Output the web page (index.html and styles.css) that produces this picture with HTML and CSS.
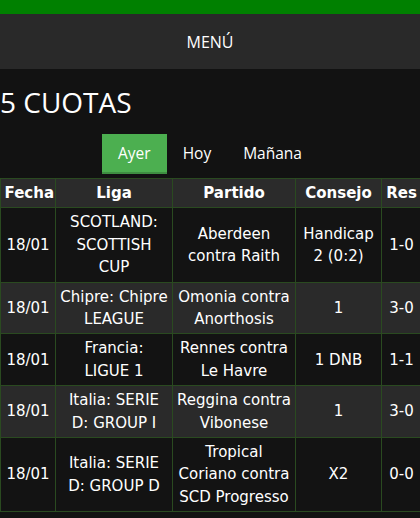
FILE: index.html
```html
<!DOCTYPE html>
<html lang="es">
<head>
<meta charset="utf-8">
<title>5 Cuotas</title>
<link rel="stylesheet" href="styles.css">
</head>
<body>
<div class="topbar"></div>
<nav class="menu">MENÚ</nav>
<h1 class="title">5 CUOTAS</h1>
<div class="tabs">
  <a class="tab active">Ayer</a>
  <a class="tab">Hoy</a>
  <a class="tab">Mañana</a>
</div>
<div class="table-wrap">
<table class="tips">
  <colgroup>
    <col class="c-fecha"><col class="c-liga"><col class="c-partido"><col class="c-consejo"><col class="c-res">
  </colgroup>
  <thead>
    <tr><th>Fecha</th><th>Liga</th><th>Partido</th><th>Consejo</th><th>Res</th></tr>
  </thead>
  <tbody>
    <tr><td>18/01</td><td>SCOTLAND: SCOTTISH CUP</td><td>Aberdeen contra Raith</td><td>Handicap 2 (0:2)</td><td>1-0</td></tr>
    <tr class="alt"><td>18/01</td><td>Chipre: Chipre LEAGUE</td><td>Omonia contra Anorthosis</td><td>1</td><td>3-0</td></tr>
    <tr><td>18/01</td><td>Francia:<br>LIGUE 1</td><td>Rennes contra Le Havre</td><td>1 DNB</td><td>1-1</td></tr>
    <tr class="alt"><td>18/01</td><td>Italia: SERIE D: GROUP I</td><td>Reggina contra Vibonese</td><td>1</td><td>3-0</td></tr>
    <tr><td>18/01</td><td>Italia: SERIE D: GROUP D</td><td>Tropical Coriano contra SCD Progresso</td><td>X2</td><td>0-0</td></tr>
  </tbody>
</table>
</div>
</body>
</html>
```
FILE: styles.css
```css
html, body {
  margin: 0;
  padding: 0;
  background: #121212;
  color: #fff;
  font-family: "Open Sans", "Noto Sans", sans-serif;
}
body {
  overflow: hidden;
}
.topbar {
  height: 14px;
  background: #008000;
}
.menu {
  height: 55px;
  background: #292929;
  display: flex;
  align-items: center;
  justify-content: center;
  font-size: 16px;
}
.title {
  margin: 14px 0 0 0;
  padding-left: 0;
  font-size: 28px;
  font-weight: 400;
  line-height: 38px;
  height: 38px;
}
.tabs {
  margin-top: 13px;
  display: flex;
  justify-content: center;
}
.tab {
  padding: 8px 16px;
  line-height: 22px;
  font-size: 15.5px;
  border-bottom: 2px solid transparent;
  color: #fff;
}
.tab.active {
  background: #4caf50;
  border-bottom-color: #3e8e41;
}
.table-wrap {
  margin-top: 4px;
  width: 420px;
  overflow: hidden;
}
.tips {
  border-collapse: collapse;
  table-layout: fixed;
  width: 421px;
  font-family: "DejaVu Sans", "Liberation Sans", sans-serif;
  font-size: 15px;
  line-height: 22.4px;
}
.c-fecha { width: 55px; }
.c-liga { width: 117px; }
.c-partido { width: 123px; }
.c-consejo { width: 86px; }
.c-res { width: 40px; }
.tips th, .tips td {
  border: 1px solid #2a4a20;
  padding: 3px 3.5px;
  text-align: center;
  vertical-align: middle;
}
.tips th {
  background: #2b2b2b;
  font-weight: 700;
}
.tips td {
  background: #131313;
}
.tips tr.alt td {
  background: #2a2a2a;
}
```
